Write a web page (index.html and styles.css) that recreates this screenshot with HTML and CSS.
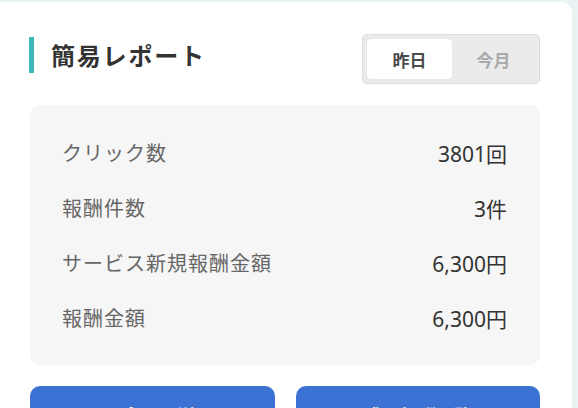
FILE: index.html
```html
<!DOCTYPE html>
<html lang="ja">
<head>
<meta charset="utf-8">
<link rel="stylesheet" href="styles.css">
</head>
<body>
<div class="card">
  <div class="header">
    <h2 class="title">簡易レポート</h2>
    <div class="toggle">
      <span class="tab active">昨日</span>
      <span class="tab">今月</span>
    </div>
  </div>
  <div class="stats">
    <div class="row"><span class="label">クリック数</span><span class="value">3801回</span></div>
    <div class="row"><span class="label">報酬件数</span><span class="value">3件</span></div>
    <div class="row"><span class="label">サービス新規報酬金額</span><span class="value">6,300円</span></div>
    <div class="row"><span class="label">報酬金額</span><span class="value">6,300円</span></div>
  </div>
  <div class="actions">
    <a class="btn">レポート詳細</a>
    <a class="btn">成果報酬一覧</a>
  </div>
</div>
</body>
</html>
```

FILE: styles.css
```css
html, body {
  margin: 0;
  padding: 0;
  background: #e9f3f3;
  overflow: hidden;
  height: 408px;
}
body {
  font-family: "Noto Sans CJK JP", "Noto Sans", sans-serif;
  padding-top: 2px;
}
.card {
  background: #ffffff;
  margin-left: -11px;
  width: 583px;
  box-sizing: border-box;
  border-radius: 10px;
  padding: 32px 32px 40px 41px;
}
.header {
  display: flex;
  justify-content: space-between;
  align-items: flex-start;
}
.title {
  margin: 3px 0 0 -1px;
  height: 36px;
  border-left: 5px solid #3cb8b8;
  padding-left: 17px;
  font-size: 24px;
  font-weight: 700;
  color: #333333;
  letter-spacing: 1.8px;
  line-height: 36px;
}
.toggle {
  display: flex;
  width: 178px;
  height: 50px;
  box-sizing: border-box;
  background: #ebebeb;
  border: 1px solid #dddddd;
  border-radius: 5px;
  padding: 4px;
}
.tab {
  flex: 1;
  display: flex;
  align-items: center;
  justify-content: center;
  font-size: 17px;
  font-weight: 700;
  color: #aaaaaa;
  border-radius: 4px;
}
.tab.active {
  background: #ffffff;
  color: #4a4a4a;
  flex: 0 0 85px;
  box-shadow: 0 0 1px rgba(0,0,0,0.15);
}
.stats {
  margin-top: 21px;
  background: #f6f6f6;
  border-radius: 10px;
  padding: 20px 33px 20px 32px;
}
.row {
  display: flex;
  justify-content: space-between;
  align-items: center;
  height: 55px;
  font-size: 20px;
}
.label {
  color: #666666;
  letter-spacing: 1px;
}
.value {
  color: #333333;
  font-size: 21px;
  font-family: "Noto Sans", "Noto Sans CJK JP", sans-serif;
}
.actions {
  margin-top: 21px;
  display: grid;
  grid-template-columns: 1fr 1fr;
  gap: 21px;
}
.btn {
  display: block;
  background: #3d72d5;
  color: #ffffff;
  border-radius: 10px;
  padding: 16px 0;
  text-align: center;
  font-size: 18px;
  font-weight: 700;
}
```
